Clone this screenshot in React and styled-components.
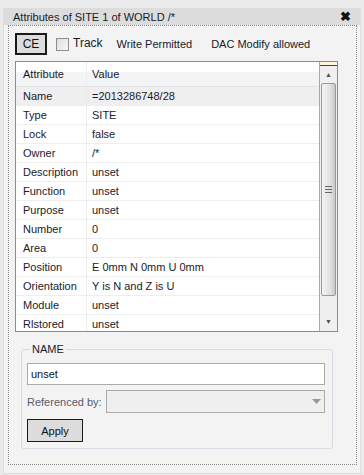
import styled, { createGlobalStyle } from "styled-components";

const GlobalStyle = createGlobalStyle`
  body {
    margin: 0;
    background: #ebebeb;
    font-family: "Liberation Sans", Arial, sans-serif;
    font-size: 11px;
    color: #1a1a2a;
  }
`;

const Window = styled.div`
  width: 358px;
  height: 466px;
  margin: 8px 0 0 3px;
  background: #f3f3f3;
  border: 1px solid #dedede;
  border-top: none;
  box-sizing: border-box;
  display: flex;
  flex-direction: column;
`;

const TitleBar = styled.div`
  height: 17px;
  background: #dcdcdc;
  display: flex;
  align-items: center;
  justify-content: space-between;
  padding: 0 9px 0 9px;
  font-size: 11px;
`;

const Close = styled.span`
  font-weight: bold;
  font-size: 13px;
  line-height: 1;
  color: #111;
`;

const Frame = styled.div`
  margin: 0 0 0 4px;
  width: 349px;
  height: 440px;
  border: 1px dotted #8a8a8a;
  box-sizing: border-box;
  padding: 7px 0 0 6px;
  display: flex;
  flex-direction: column;
`;

const Toolbar = styled.div`
  display: flex;
  align-items: center;
  height: 22px;
`;

const Button = styled.button`
  font-family: inherit;
  font-size: ${(p) => p.$fs || 11}px;
  font-weight: normal;
  color: #111;
  background: #dcdcdc;
  border: ${(p) => (p.$thick ? "2px" : "1px")} solid #1a1a1a;
  width: ${(p) => p.$w}px;
  height: ${(p) => p.$h}px;
  padding: 0;
  box-sizing: border-box;
`;

const Check = styled.span`
  width: 13px;
  height: 13px;
  margin-left: 9px;
  border: 1px solid #8e8e8e;
  background: linear-gradient(135deg, #dcdcdc, #f8f8f8);
  box-sizing: border-box;
`;

const Label = styled.span`
  margin-left: ${(p) => p.$ml}px;
  margin-top: ${(p) => p.$mt || 0}px;
  font-size: ${(p) => p.$fs || 11}px;
`;

const Table = styled.div`
  margin-top: 6px;
  width: 323px;
  height: 271px;
  border: 1px solid #8c8c8c;
  box-sizing: border-box;
  background: #fff;
  display: flex;
  overflow: hidden;
`;

const Grid = styled.div`
  flex: 1;
  display: flex;
  flex-direction: column;
`;

const HeaderRow = styled.div`
  display: grid;
  grid-template-columns: 71px 1fr;
  height: 24px;
  flex-shrink: 0;
  background: linear-gradient(#fff 0, #fff 40%, #f3f4f6 40%, #f3f4f6 100%);
  border-bottom: 1px solid #e2e4e8;
  align-items: center;
`;

const Row = styled.div`
  display: grid;
  grid-template-columns: 71px 1fr;
  height: 19px;
  flex-shrink: 0;
  background: ${(p) => (p.$selected ? "#efefef" : "#fff")};
  border-bottom: 1px solid #eeeeee;
  box-sizing: border-box;
  align-items: center;
`;

const Cell = styled.div`
  padding-left: ${(p) => (p.$first ? 7 : 5)}px;
  height: 100%;
  display: flex;
  align-items: center;
  white-space: nowrap;
  overflow: hidden;
  border-right: ${(p) => (p.$first ? "1px solid #ececec" : "none")};
  box-sizing: border-box;
`;

const Scrollbar = styled.div`
  width: 17px;
  border-left: 1px solid #a8a8a8;
  background: #f0f0f0;
  display: flex;
  flex-direction: column;
`;

const Corner = styled.div`
  height: 3px;
  background: #fff8d8;
  border-bottom: 1px solid #444;
`;

const ArrowBtn = styled.div`
  height: ${(p) => p.$h}px;
  display: flex;
  align-items: ${(p) => (p.$down ? "flex-end" : "center")};
  justify-content: center;
  padding-bottom: ${(p) => (p.$down ? 5 : 0)}px;
  box-sizing: border-box;
  color: #555;
  font-size: 7px;
`;

const Thumb = styled.div`
  margin: 0 1px;
  flex: 0 0 211px;
  border: 1px solid #9a9a9a;
  border-radius: 2px;
  background: linear-gradient(90deg, #f4f4f4, #dedede 70%, #c8c8c8);
  display: flex;
  align-items: center;
  justify-content: center;
`;

const Group = styled.fieldset`
  margin: 11px 0 0 6px;
  width: 312px;
  height: 106px;
  border: 1px solid #d6dce4;
  border-radius: 3px;
  padding: 8px 7px 0 5px;
  box-sizing: border-box;
  display: flex;
  flex-direction: column;
  gap: 5px;

  legend {
    padding: 0 2px;
    margin-left: 3px;
    font-size: 11px;
  }
`;

const Input = styled.div`
  height: 22px;
  border: 1px solid #ababab;
  background: #fff;
  display: flex;
  align-items: center;
  padding-left: 3px;
  box-sizing: border-box;
  color: #111;
`;

const RefRow = styled.div`
  display: flex;
  align-items: center;
  gap: 4px;
  color: #5a5a6a;
`;

const Select = styled.div`
  flex: 1;
  height: 23px;
  border: 1px solid #ababab;
  background: #efefef;
  display: flex;
  justify-content: flex-end;
  align-items: center;
  padding-right: 3px;
  box-sizing: border-box;
`;

const ApplyRow = styled.div`
  margin-top: 1px;
`;

const rows = [
  ["Name", "=2013286748/28"],
  ["Type", "SITE"],
  ["Lock", "false"],
  ["Owner", "/*"],
  ["Description", "unset"],
  ["Function", "unset"],
  ["Purpose", "unset"],
  ["Number", "0"],
  ["Area", "0"],
  ["Position", "E 0mm N 0mm U 0mm"],
  ["Orientation", "Y is N and Z is U"],
  ["Module", "unset"],
  ["Rlstored", "unset"],
];

export default function App() {
  return (
    <>
      <GlobalStyle />
      <Window>
        <TitleBar>
          <span>Attributes of SITE 1 of WORLD /*</span>
          <Close>✖</Close>
        </TitleBar>
        <Frame>
          <Toolbar>
            <Button $thick $w={32} $h={22} $fs={12}>CE</Button>
            <Check />
            <Label $ml={4} $mt={-3} $fs={12}>Track</Label>
            <Label $ml={14}>Write Permitted</Label>
            <Label $ml={19}>DAC Modify allowed</Label>
          </Toolbar>
          <Table>
            <Grid>
              <HeaderRow>
                <Cell $first>Attribute</Cell>
                <Cell>Value</Cell>
              </HeaderRow>
              {rows.map(([k, v], i) => (
                <Row key={k} $selected={i === 0}>
                  <Cell $first>{k}</Cell>
                  <Cell>{v}</Cell>
                </Row>
              ))}
            </Grid>
            <Scrollbar>
              <Corner />
              <ArrowBtn $h={17}>▲</ArrowBtn>
              <Thumb>
                <svg width="7" height="7" viewBox="0 0 7 7">
                  <path d="M0 0.5H7M0 3.5H7M0 6.5H7" stroke="#666" strokeWidth="1" />
                </svg>
              </Thumb>
              <ArrowBtn $h={34} $down>▼</ArrowBtn>
            </Scrollbar>
          </Table>
          <Group>
            <legend>NAME</legend>
            <Input>unset</Input>
            <RefRow>
              <span>Referenced by:</span>
              <Select>
                <svg width="9" height="5" viewBox="0 0 9 5">
                  <path d="M0 0H9L4.5 5Z" fill="#999" />
                </svg>
              </Select>
            </RefRow>
            <ApplyRow>
              <Button $w={56} $h={23}>Apply</Button>
            </ApplyRow>
          </Group>
        </Frame>
      </Window>
    </>
  );
}
